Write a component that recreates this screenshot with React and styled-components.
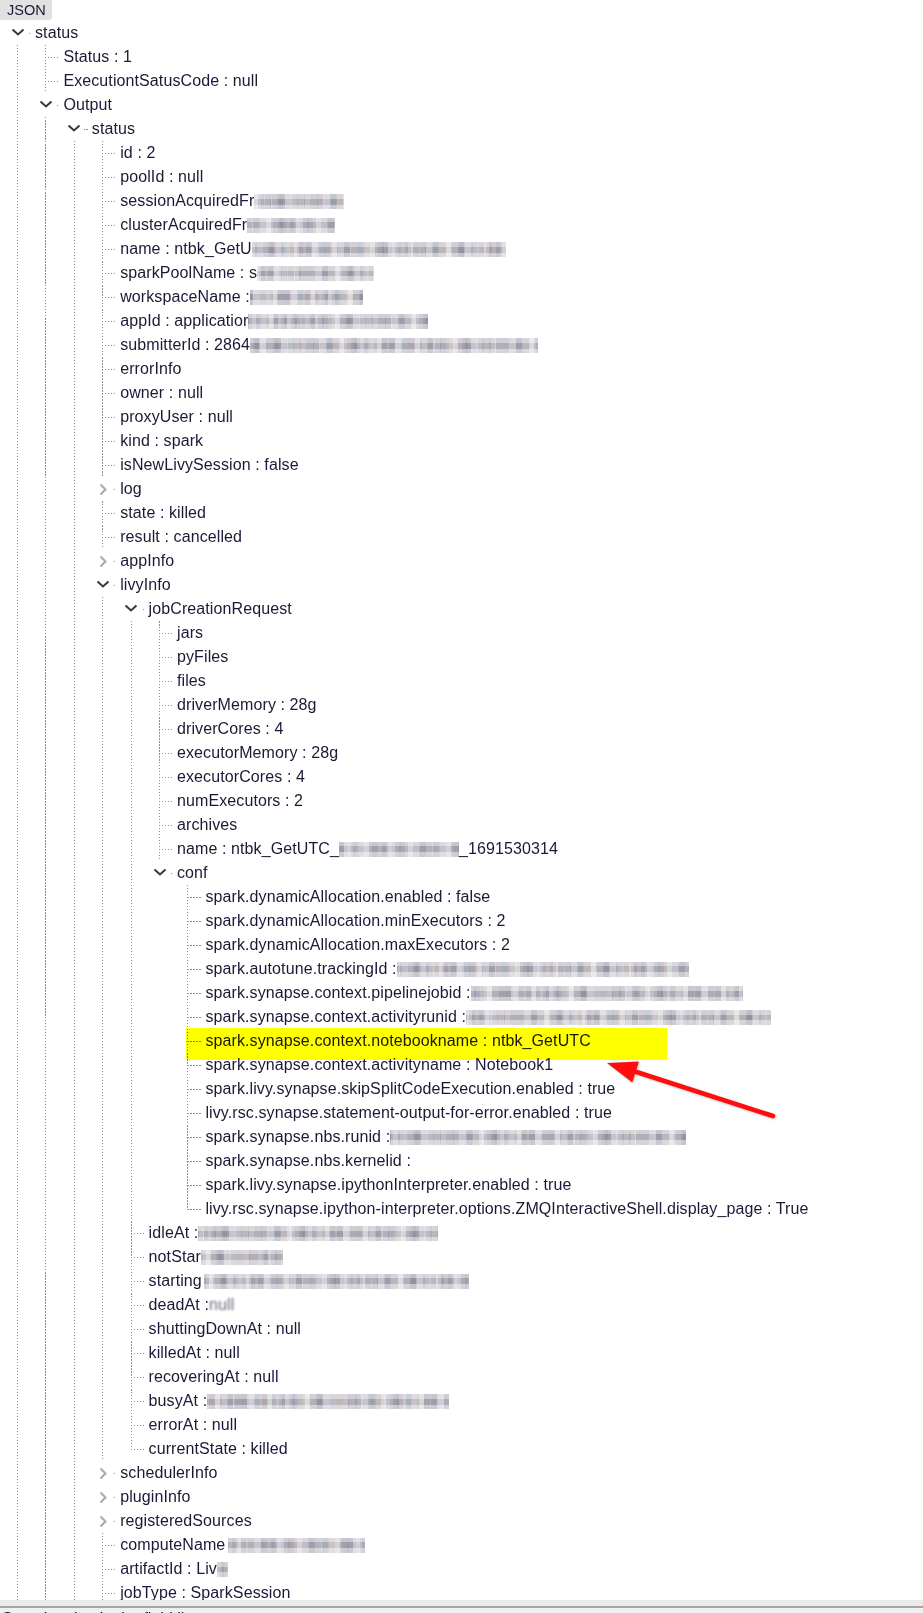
import React from 'react';
import styled, { createGlobalStyle } from 'styled-components';

const STEP = 28.4;
const ROW = 24;

const dotsY = 'repeating-linear-gradient(to bottom, #8c8c8c 0 1.5px, transparent 1.5px 3px)';
const dotsX = 'repeating-linear-gradient(to right, #8c8c8c 0 1.5px, transparent 1.5px 3px)';

const GlobalStyle = createGlobalStyle`
  html, body {
    margin: 0;
    padding: 0;
    background: #fff;
  }
  body {
    font-family: "Liberation Sans", Arial, sans-serif;
  }
`;

const Page = styled.div`
  position: relative;
  width: 923px;
  height: 1613px;
  display: flex;
  flex-direction: column;
  overflow: hidden;
  background: #fff;
  color: #1b1935;
`;

const Header = styled.div`
  height: 20px;
  display: flex;
`;

const Tab = styled.div`
  width: 52px;
  height: 20px;
  box-sizing: border-box;
  padding-left: 7px;
  display: flex;
  align-items: center;
  background: #e1e1e1;
  border-radius: 0 0 3px 0;
  font-size: 14.5px;
`;

const Tree = styled.ul`
  flex: 1;
  margin: 0;
  padding: 1px 0 0;
  list-style: none;
  overflow: hidden;
  font-size: 16px;
  letter-spacing: 0.1px;
`;

const List = styled.ul`
  margin: 0;
  padding: 0;
  list-style: none;
`;

const Item = styled.li`
  position: relative;

  &::after {
    content: '';
    position: absolute;
    left: ${p => p.$level * STEP + 17}px;
    top: ${p => (p.$first ? ROW / 2 : 0)}px;
    width: 1px;
    height: ${p => (p.$last ? `${ROW / 2}px` : '100%')};
    background: ${dotsY};
  }
`;

const Row = styled.div`
  position: relative;
  height: ${ROW}px;
  display: flex;
  align-items: center;
  padding-left: ${p => p.$level * STEP + 35}px;
  white-space: nowrap;

  &::before {
    content: '';
    position: absolute;
    left: ${p => p.$level * STEP + 17}px;
    top: ${ROW / 2}px;
    width: 15px;
    height: 1px;
    background: ${dotsX};
  }
`;

const Toggle = styled.span`
  position: absolute;
  left: ${p => p.$level * STEP + 8}px;
  top: 0;
  width: 19px;
  height: ${ROW}px;
  display: flex;
  align-items: center;
  justify-content: center;
  background: #fff;
  z-index: 2;
`;

const Blur = styled.span`
  display: inline-block;
  width: ${p => p.$w}px;
  height: 15px;
  margin-left: ${p => p.$gap || 0}px;
  background:
    linear-gradient(180deg, rgba(255, 255, 255, 0.4) 0 30%, transparent 30% 70%, rgba(255, 255, 255, 0.45) 70%),
    repeating-linear-gradient(90deg, rgba(255, 255, 255, 0.18) 0 6px, transparent 6px 13px, rgba(80, 70, 100, 0.14) 13px 19px, transparent 19px 27px),
    repeating-linear-gradient(90deg, #b2afb9 0 7px, #a19eab 7px 13px, #c6c3cb 13px 20px, #a8adb9 20px 26px, #bdb6bb 26px 33px, #d3d1d6 33px 38px);
  background-position: 0 0, ${p => p.$seed * 5}px 0, ${p => p.$seed * 9}px 0;
`;

const Smudge = styled.span`
  filter: blur(0.8px);
  color: #6a6a78;
`;

const Highlight = styled.span`
  position: absolute;
  left: 186px;
  top: -1px;
  width: 481px;
  height: 32px;
  background: #ffff00;
  mix-blend-mode: multiply;
  z-index: 3;
`;

const Arrow = styled.svg`
  position: absolute;
  left: 600px;
  top: 1050px;
  overflow: visible;
  pointer-events: none;
  filter: drop-shadow(1px 1px 1px rgba(0, 0, 0, 0.25));
`;

const Footer = styled.div`
  height: 13px;
  display: flex;
  flex-direction: column;
  background: #f0f0f0;
  overflow: hidden;
`;

const FooterBand = styled.div`
  height: 6px;
  flex: none;
  background: #ebebeb;
  border-bottom: 2px solid #a6a6a6;
`;

const FooterText = styled.div`
  padding: 2px 0 0 2px;
  font-size: 16px;
  line-height: 18px;
  white-space: nowrap;
`;

const Chevron = ({ open }) =>
  open ? (
    <svg width="14" height="8" viewBox="0 0 14 8" style={{ marginTop: -2 }}>
      <polyline points="1.5,1.5 7,6.5 12.5,1.5" fill="none" stroke="#383838" strokeWidth="2" />
    </svg>
  ) : (
    <svg width="8" height="13" viewBox="0 0 8 13">
      <polyline points="1.5,1.5 6.5,6.5 1.5,11.5" fill="none" stroke="#a8a8a8" strokeWidth="2" />
    </svg>
  );

const leaf = (t, extra = {}) => ({ t, ...extra });
const node = (t, kids, open = true) => ({ t, kids, open });

const conf = [
  leaf('spark.dynamicAllocation.enabled : false'),
  leaf('spark.dynamicAllocation.minExecutors : 2'),
  leaf('spark.dynamicAllocation.maxExecutors : 2'),
  leaf('spark.autotune.trackingId : ', { b: 292, s: 1 }),
  leaf('spark.synapse.context.pipelinejobid : ', { b: 272, s: 3 }),
  leaf('spark.synapse.context.activityrunid : ', { b: 305, s: 5 }),
  leaf('spark.synapse.context.notebookname : ntbk_GetUTC', { hl: true }),
  leaf('spark.synapse.context.activityname : Notebook1'),
  leaf('spark.livy.synapse.skipSplitCodeExecution.enabled : true'),
  leaf('livy.rsc.synapse.statement-output-for-error.enabled : true'),
  leaf('spark.synapse.nbs.runid : ', { b: 296, s: 2 }),
  leaf('spark.synapse.nbs.kernelid : '),
  leaf('spark.livy.synapse.ipythonInterpreter.enabled : true'),
  leaf('livy.rsc.synapse.ipython-interpreter.options.ZMQInteractiveShell.display_page : True'),
];

const jobCreationRequest = [
  leaf('jars'),
  leaf('pyFiles'),
  leaf('files'),
  leaf('driverMemory : 28g'),
  leaf('driverCores : 4'),
  leaf('executorMemory : 28g'),
  leaf('executorCores : 4'),
  leaf('numExecutors : 2'),
  leaf('archives'),
  leaf('name : ntbk_GetUTC_', { b: 120, s: 4, after: '_1691530314' }),
  node('conf', conf),
];

const livyInfo = [
  node('jobCreationRequest', jobCreationRequest),
  leaf('idleAt : ', { b: 240, s: 2 }),
  leaf('notStar', { b: 82, s: 6 }),
  leaf('starting', { b: 265, s: 1, gap: 2 }),
  leaf('deadAt : ', { smudge: 'null' }),
  leaf('shuttingDownAt : null'),
  leaf('killedAt : null'),
  leaf('recoveringAt : null'),
  leaf('busyAt : ', { b: 242, s: 3 }),
  leaf('errorAt : null'),
  leaf('currentState : killed'),
];

const statusKids = [
  leaf('id : 2'),
  leaf('poolId : null'),
  leaf('sessionAcquiredFr', { b: 90, s: 2 }),
  leaf('clusterAcquiredFr', { b: 88, s: 4 }),
  leaf('name : ntbk_GetU', { b: 254, s: 1 }),
  leaf('sparkPoolName : s', { b: 117, s: 5 }),
  leaf('workspaceName : ', { b: 113, s: 3 }),
  leaf('appId : applicatior', { b: 180, s: 6 }),
  leaf('submitterId : 2864', { b: 288, s: 2 }),
  leaf('errorInfo'),
  leaf('owner : null'),
  leaf('proxyUser : null'),
  leaf('kind : spark'),
  leaf('isNewLivySession : false'),
  node('log', null, false),
  leaf('state : killed'),
  leaf('result : cancelled'),
  node('appInfo', null, false),
  node('livyInfo', livyInfo),
  node('schedulerInfo', null, false),
  node('pluginInfo', null, false),
  node('registeredSources', null, false),
  leaf('computeName', { b: 137, s: 4, gap: 3 }),
  leaf('artifactId : Liv', { b: 11, s: 2 }),
  leaf('jobType : SparkSession'),
];

const data = [
  node('status', [
    leaf('Status : 1'),
    leaf('ExecutiontSatusCode : null'),
    node('Output', [node('status', statusKids)], true),
  ]),
];

// lists whose items continue below the visible area
const continued = new Set([data, data[0].kids, data[0].kids[2].kids, statusKids]);

const TreeNode = ({ item, level, first, last }) => {
  const hasToggle = item.kids !== undefined;
  return (
    <Item $level={level} $first={first} $last={last}>
      <Row $level={level}>
        {hasToggle && (
          <Toggle $level={level}>
            <Chevron open={item.open} />
          </Toggle>
        )}
        <span>{item.t}</span>
        {item.smudge && <Smudge>{item.smudge}</Smudge>}
        {item.b && <Blur $w={item.b} $seed={item.s} $gap={item.gap} />}
        {item.after && <span>{item.after}</span>}
        {item.hl && <Highlight />}
      </Row>
      {item.open && item.kids && <Branch items={item.kids} level={level + 1} />}
    </Item>
  );
};

const Branch = ({ items, level }) => (
  <List>
    {items.map((it, i) => (
      <TreeNode
        key={i}
        item={it}
        level={level}
        first={false}
        last={i === items.length - 1 && !continued.has(items)}
      />
    ))}
  </List>
);

export default function App() {
  return (
    <Page>
      <GlobalStyle />
      <Header>
        <Tab>JSON</Tab>
      </Header>
      <Tree>
        {data.map((it, i) => (
          <TreeNode key={i} item={it} level={0} first={i === 0} last={false} />
        ))}
      </Tree>
      <Footer>
        <FooterBand />
        <FooterText>Search value in the field list</FooterText>
      </Footer>
      <Arrow width="190" height="80" viewBox="0 0 190 80">
        <line x1="35" y1="21.5" x2="173" y2="66" stroke="#ff0d0d" strokeWidth="4.5" strokeLinecap="round" />
        <polygon points="7,13 38.9,11.4 32.3,32.4" fill="#ff0d0d" />
      </Arrow>
    </Page>
  );
}
